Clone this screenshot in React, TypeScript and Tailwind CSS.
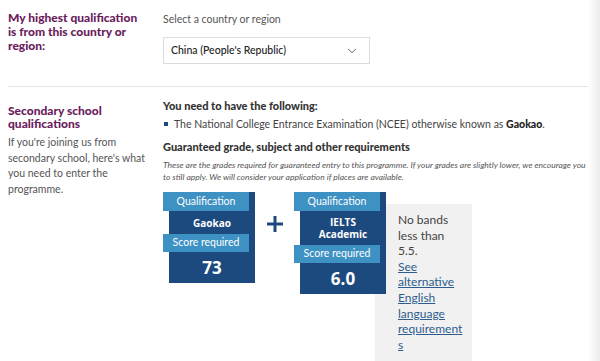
import { ChevronDown } from "lucide-react";

const heading = "font-['Lato',sans-serif] font-black text-[#6b1d5c]";
const sub = "font-['Lato',sans-serif] font-black text-[#333]";

function Card({ name, score, lines }: { name: string[]; score: string; lines?: boolean }) {
  return (
    <div className="relative z-10 w-[92px] pt-[9px]">
      <div className="ml-[6px] w-[86px] bg-[#1d4a7e] text-white">
        <div className="-ml-[6px] -mt-[9px] flex h-[19px] w-[86px] items-center justify-center bg-[#3d91c3] text-[10.5px]">
          Qualification
        </div>
        <div className={`flex flex-col items-center justify-center font-['Open_Sans',sans-serif] text-[10px] font-bold leading-[12px] ${lines ? "h-[34px]" : "h-[23px]"}`}>
          {name.map((n) => (
            <span key={n}>{n}</span>
          ))}
        </div>
        <div className="-ml-[6px] flex h-[18px] w-[86px] items-center justify-center bg-[#3d91c3] text-[10.5px]">
          Score required
        </div>
        <div className="flex h-[31px] items-center justify-center font-['Open_Sans',sans-serif] text-[17px] font-bold">
          {score}
        </div>
      </div>
    </div>
  );
}

export default function App() {
  return (
    <div className="flex h-[361px] w-[600px] overflow-hidden bg-white font-['Lato',sans-serif]">
      <div className="w-[588px] pl-[8px]">
        <div className="flex border-b border-[#e6e6e6] pb-[22px] pt-[11px]">
          <div className="w-[155px]">
            <h2 className={`${heading} w-[136px] text-[12px] leading-[14px]`}>
              My highest qualification is from this country or region:
            </h2>
          </div>
          <div className="pt-[1px]">
            <p className="text-[10.5px] leading-[14px] text-[#555]">Select a country or region</p>
            <div className="mt-[11px] flex h-[27px] w-[207px] items-center justify-between border border-[#dcdcdc] pl-[7px] pr-[10px] text-[10.5px] font-medium text-[#222]">
              <span>China (People's Republic)</span>
              <ChevronDown className="h-[14px] w-[14px] text-[#333]" strokeWidth={1.3} />
            </div>
          </div>
        </div>

        <div className="flex">
          <div className="w-[155px] pr-1 pt-[17px]">
            <h3 className={`${heading} text-[12px] leading-[13px]`}>Secondary school qualifications</h3>
            <p className="mt-[5px] text-[10.5px] leading-[15.5px] text-[#555]">
              If you're joining us from secondary school, here's what you need to enter the programme.
            </p>
          </div>
          <div className="flex-1 pt-[12px]">
            <p className={`${sub} text-[11px] leading-[14px]`}>You need to have the following:</p>
            <p className="mt-[4px] flex items-center text-[10.5px] leading-[14px] text-[#444]">
              <span className="mr-[6px] ml-[1px] inline-block h-[4px] w-[4px] bg-[#1d4a7e]" />
              The National College Entrance Examination (NCEE) otherwise known as&nbsp;
              <b className="font-black text-[#222]">Gaokao</b>.
            </p>
            <p className={`${sub} mt-[9px] text-[11px] leading-[14px]`}>
              Guaranteed grade, subject and other requirements
            </p>
            <p className="mt-[5px] text-[8.5px] italic leading-[12px] text-[#555]">
              These are the grades required for guaranteed entry to this programme. If your grades are slightly lower, we encourage you to still apply. We will consider your application if places are available.
            </p>

            <div className="mt-[9px] flex items-start">
              <Card name={["Gaokao"]} score="73" />
              <div className="ml-[12px] mr-[11px] mt-[24px] text-[#1d4a7e]">
                <svg width="16" height="16" viewBox="0 0 16 16">
                  <path d="M8 0v16M0 8h16" stroke="currentColor" strokeWidth="3" />
                </svg>
              </div>
              <Card name={["IELTS", "Academic"]} score="6.0" lines />
              <div className="-ml-[11px] mt-[12px] h-[200px] w-[97px] bg-[#f1f1f1] pl-[23px] pt-[8px] text-[12px] leading-[15.6px]">
                <p className="w-[66px] text-[#444]">No bands less than 5.5.</p>
                <a href="#" className="block w-[66px] break-words text-[#2d5d8f] underline">
                  See alternative English language requirements
                </a>
              </div>
            </div>
          </div>
        </div>
      </div>
      <div className="h-full w-[12px] bg-gradient-to-r from-white to-[#ececec]" />
    </div>
  );
}
